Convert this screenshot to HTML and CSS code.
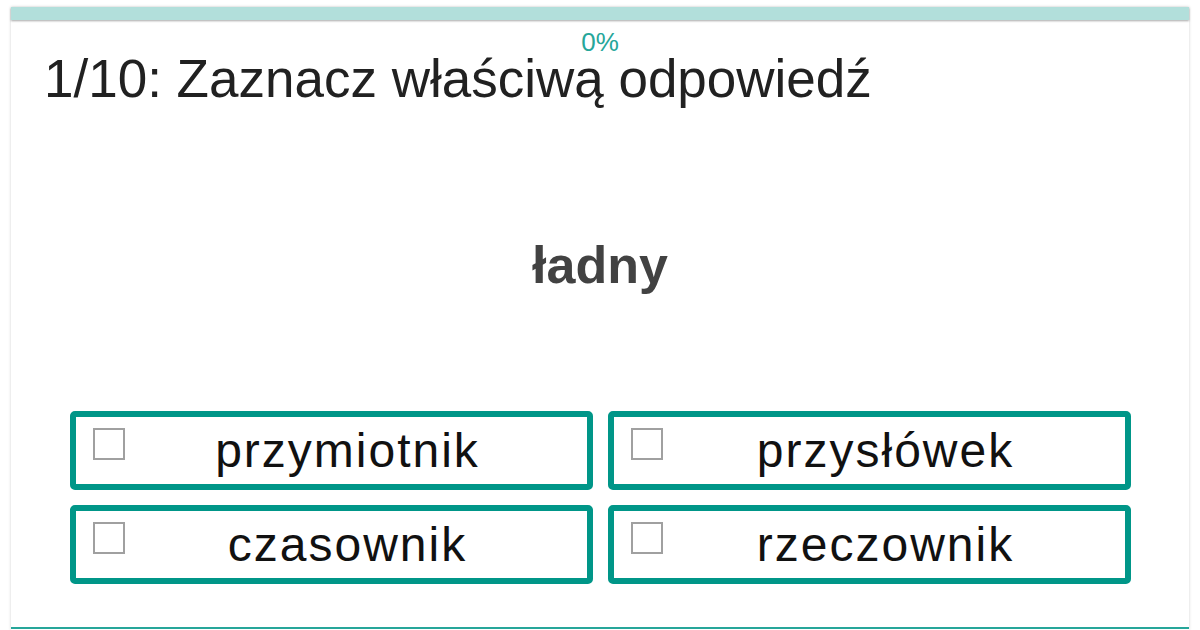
FILE: index.html
```html
<!DOCTYPE html>
<html lang="pl">
<head>
<meta charset="utf-8">
<link rel="stylesheet" href="styles.css">
</head>
<body>
<div class="card">
  <div class="progress"><div class="progress-fill"></div></div>
  <div class="percent">0%</div>
  <h1 class="title">1/10: Zaznacz właściwą odpowiedź</h1>
  <div class="word">ładny</div>
  <div class="answers">
    <div class="answer"><span class="box"></span><span class="label">przymiotnik</span></div>
    <div class="answer"><span class="box"></span><span class="label">przysłówek</span></div>
    <div class="answer"><span class="box"></span><span class="label">czasownik</span></div>
    <div class="answer"><span class="box"></span><span class="label">rzeczownik</span></div>
  </div>
  <div class="footer-line"></div>
</div>
</body>
</html>
```
FILE: styles.css
```css
html, body {
  margin: 0;
  padding: 0;
  background: #ffffff;
  font-family: "Liberation Sans", Arial, sans-serif;
  overflow: hidden;
}
.card {
  margin: 7px 11px 0;
  height: 623px;
  background: #fff;
  box-shadow: 0 0 3px rgba(0,0,0,0.18);
  display: flex;
  flex-direction: column;
}
.progress {
  flex: none;
  height: 13px;
  background: #b2dfdb;
  box-shadow: 0 1px 2px rgba(0,0,0,0.35);
}
.progress-fill {
  width: 0;
  height: 100%;
  background: #009688;
}
.percent {
  margin-top: 12px;
  text-align: center;
  color: #26a69a;
  font-size: 26px;
  line-height: 20px;
}
.title {
  margin: 1px 0 0 33px;
  font-weight: 400;
  font-size: 53px;
  line-height: 52px;
  color: #212121;
}
.word {
  margin-top: 130px;
  text-align: center;
  font-weight: 700;
  font-size: 52px;
  line-height: 60px;
  color: #424242;
}
.answers {
  margin: 116px 58px 0 59px;
  display: grid;
  grid-template-columns: 1fr 1fr;
  gap: 15px;
}
.answer {
  height: 67px;
  border: 6px solid #009688;
  border-radius: 5px;
  display: flex;
  align-items: center;
  position: relative;
}
.box {
  position: absolute;
  left: 17px;
  top: 11px;
  width: 28px;
  height: 28px;
  border: 2px solid #a0a0a0;
}
.label {
  flex: 1;
  text-align: center;
  padding-left: 32px;
  font-size: 48px;
  letter-spacing: 2px;
  line-height: 50px;
  color: #111;
}
.footer-line {
  margin-top: auto;
  height: 2px;
  margin-bottom: 1px;
  background: #26a69a;
}
```
